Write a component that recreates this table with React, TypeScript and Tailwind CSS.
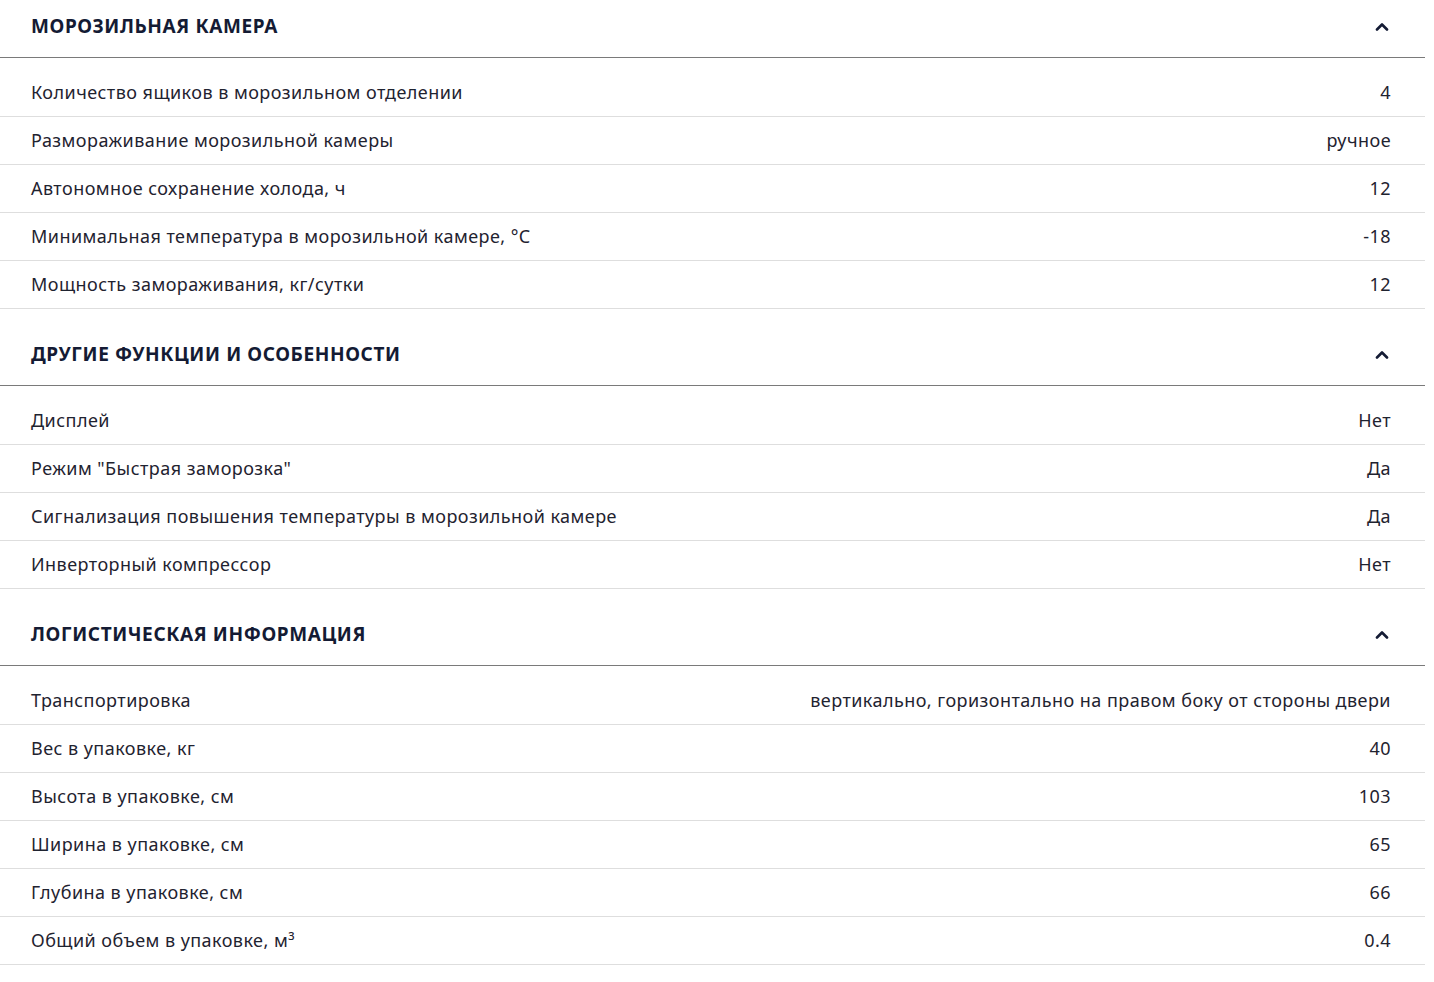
const SECTIONS: { title: string; rows: [string, string][] }[] = [
  {
    title: "Морозильная камера",
    rows: [
      ["Количество ящиков в морозильном отделении", "4"],
      ["Размораживание морозильной камеры", "ручное"],
      ["Автономное сохранение холода, ч", "12"],
      ["Минимальная температура в морозильной камере, °C", "-18"],
      ["Мощность замораживания, кг/сутки", "12"],
    ],
  },
  {
    title: "Другие функции и особенности",
    rows: [
      ["Дисплей", "Нет"],
      ["Режим \"Быстрая заморозка\"", "Да"],
      ["Сигнализация повышения температуры в морозильной камере", "Да"],
      ["Инверторный компрессор", "Нет"],
    ],
  },
  {
    title: "Логистическая информация",
    rows: [
      ["Транспортировка", "вертикально, горизонтально на правом боку от стороны двери"],
      ["Вес в упаковке, кг", "40"],
      ["Высота в упаковке, см", "103"],
      ["Ширина в упаковке, см", "65"],
      ["Глубина в упаковке, см", "66"],
      ["Общий объем в упаковке, м³", "0.4"],
    ],
  },
];

function Chevron() {
  return (
    <svg width="14" height="9" viewBox="0 0 14 9" fill="none" className="text-[#141b34]">
      <path d="M2 7.5L7 2.5L12 7.5" stroke="currentColor" strokeWidth="2.6" strokeLinecap="round" strokeLinejoin="round" />
    </svg>
  );
}

export default function App() {
  return (
    <div className="w-[1425px] bg-white font-['Noto_Sans',sans-serif]">
      {SECTIONS.map((s, i) => (
        <section key={s.title} className={i > 0 ? "mt-[19px]" : ""}>
          {/* Header */}
          <div className="h-[58px] flex items-center justify-between pl-[31px] pr-[36px] border-b border-[#7a7a7a]">
            <h2 className="text-[19px] font-bold uppercase text-[#141b34] tracking-[0.6px] -mt-[5px]">{s.title}</h2>
            <span className="-mt-[4px]"><Chevron /></span>
          </div>
          <div className="pt-[11px]">
            {s.rows.map(([k, v]) => (
              <div
                key={k}
                className="h-[48px] flex items-center justify-between pl-[31px] pr-[34px] border-b border-[#dedede] text-[18px] tracking-[0.45px] text-[#1f2330]"
              >
                <span>{k}</span>
                <span>{v}</span>
              </div>
            ))}
          </div>
        </section>
      ))}
    </div>
  );
}
